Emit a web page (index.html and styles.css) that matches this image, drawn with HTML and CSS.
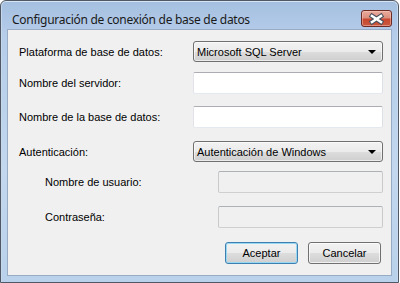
FILE: index.html
```html
<!DOCTYPE html>
<html lang="es">
<head>
<meta charset="utf-8">
<title>Configuración de conexión de base de datos</title>
<link rel="stylesheet" href="styles.css">
</head>
<body>
<div class="window">
  <div class="titlebar">
    <span class="title">Configuración de conexión de base de datos</span>
    <div class="close" aria-label="Cerrar">
      <svg width="31" height="17" viewBox="0 0 31 17">
        <path d="M11 6 L20 12 M20 6 L11 12" stroke="#4a4f5c" stroke-width="4.6" stroke-linecap="square" fill="none"/>
        <path d="M11 6 L20 12 M20 6 L11 12" stroke="#ffffff" stroke-width="2.6" stroke-linecap="square" fill="none"/>
      </svg>
    </div>
  </div>
  <div class="client">
    <div class="form">
      <div class="row">
        <span class="label">Plataforma de base de datos:</span>
        <div class="combo"><span class="combo-text">Microsoft SQL Server</span><span class="arrow"></span></div>
      </div>
      <div class="row gap10">
        <span class="label">Nombre del servidor:</span>
        <div class="textbox"></div>
      </div>
      <div class="row gap12">
        <span class="label">Nombre de la base de datos:</span>
        <div class="textbox"></div>
      </div>
      <div class="row gap13">
        <span class="label">Autenticación:</span>
        <div class="combo"><span class="combo-text">Autenticación de Windows</span><span class="arrow"></span></div>
      </div>
      <div class="row indent gap9">
        <span class="label">Nombre de usuario:</span>
        <div class="textbox disabled"></div>
      </div>
      <div class="row indent gap13">
        <span class="label">Contraseña:</span>
        <div class="textbox disabled"></div>
      </div>
      <div class="buttons gap14">
        <div class="btn default">Aceptar</div>
        <div class="btn">Cancelar</div>
      </div>
    </div>
  </div>
</div>
</body>
</html>
```
FILE: styles.css
```css
html, body {
  margin: 0;
  padding: 0;
  background: #ffffff;
}

body {
  font-family: "Liberation Sans", Arial, sans-serif;
  font-size: 11px;
  color: #000000;
}

.window {
  box-sizing: border-box;
  width: 399px;
  height: 283px;
  border: 1px solid #4f5864;
  border-radius: 6px 6px 0 0;
  background: linear-gradient(180deg, #a4bfe0 0%, #b6cdea 12%, #bcd3ec 40%, #c3d8ef 60%, #b9d1ea 100%);
  display: flex;
  flex-direction: column;
  box-shadow: inset 0 1px 0 #d6e4f3, inset 1px 0 0 #c6d8ec, inset -1px 0 0 #c6d8ec;
}

.titlebar {
  height: 28px;
  display: flex;
  align-items: flex-start;
  flex: none;
}

.title {
  font-family: "Noto Sans", "Open Sans", sans-serif;
  font-size: 12px;
  letter-spacing: -0.28px;
  line-height: 16px;
  margin-top: 11px;
  padding-left: 11px;
  color: #1a1a1a;
  white-space: nowrap;
}

.close {
  margin-left: auto;
  margin-right: 6px;
  margin-top: 9px;
  width: 31px;
  height: 17px;
  box-sizing: border-box;
  border: 1px solid #6c2b24;
  border-radius: 3px;
  background: linear-gradient(180deg, #e9ab9d 0%, #dc907f 45%, #c9482f 55%, #c95a3f 100%);
  box-shadow: inset 0 0 0 1px rgba(255, 210, 200, 0.45);
  position: relative;
  overflow: hidden;
}

.close svg {
  position: absolute;
  left: -1px;
  top: -1px;
}

.client {
  flex: 1;
  margin: 0 6px 6px 6px;
  border: 1px solid #97abc4;
  background: #f0f0f0;
}

.form {
  display: flex;
  flex-direction: column;
  padding: 11px 0 0 11px;
}

.row {
  display: flex;
  align-items: center;
}

.row.indent {
  padding-left: 26px;
}

.gap9 { margin-top: 9px; }
.gap10 { margin-top: 10px; }
.gap12 { margin-top: 12px; }
.gap13 { margin-top: 13px; }
.gap14 { margin-top: 14px; }

.label {
  width: 174px;
  flex: none;
  white-space: nowrap;
}

.row.indent .label {
  width: 173px;
}

.combo {
  box-sizing: border-box;
  width: 190px;
  height: 21px;
  border: 1px solid #707070;
  border-radius: 3px;
  background: linear-gradient(180deg, #f2f2f2 0%, #ebebeb 50%, #dddddd 51%, #cfcfcf 100%);
  box-shadow: inset 0 0 0 1px rgba(255, 255, 255, 0.6);
  display: flex;
  align-items: center;
  padding-left: 3px;
  padding-right: 6px;
}

.combo-text {
  flex: 1;
  white-space: nowrap;
}

.arrow {
  width: 0;
  height: 0;
  border-left: 4px solid transparent;
  border-right: 4px solid transparent;
  border-top: 4px solid #000000;
}

.textbox {
  box-sizing: border-box;
  width: 190px;
  height: 22px;
  background: #ffffff;
  border: 1px solid;
  border-color: #abadb3 #dbdfe6 #e3e9ef #e2e3ea;
  border-radius: 2px;
}

.row.indent .textbox {
  width: 165px;
}

.textbox.disabled {
  background: #f0f0f0;
  border-color: #adb2b5 #c9c9c9 #cfcfcf #c9c9c9;
}

.buttons {
  display: flex;
  justify-content: flex-end;
  gap: 10px;
  padding-right: 10px;
}

.btn {
  box-sizing: border-box;
  width: 73px;
  height: 22px;
  border: 1px solid #707070;
  border-radius: 3px;
  background: linear-gradient(180deg, #f2f2f2 0%, #ebebeb 50%, #dddddd 51%, #cfcfcf 100%);
  box-shadow: inset 0 0 0 1px rgba(255, 255, 255, 0.7);
  display: flex;
  align-items: center;
  justify-content: center;
}

.btn.default {
  border-color: #3c7fb1;
  box-shadow: inset 0 0 0 1px #9ad8f2;
}
```
